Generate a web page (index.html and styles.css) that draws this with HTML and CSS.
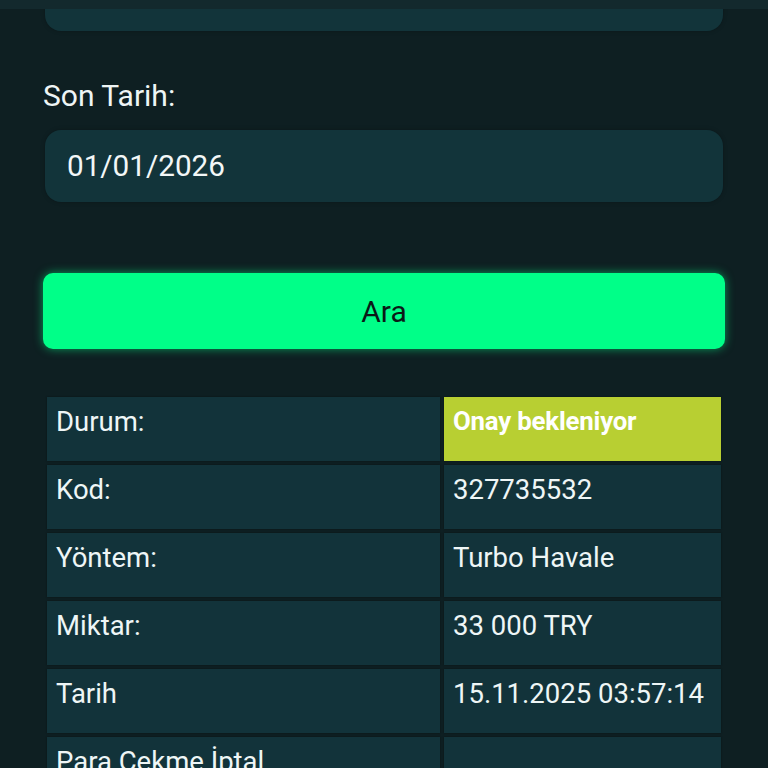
FILE: index.html
```html
<!DOCTYPE html>
<html lang="tr">
<head>
<meta charset="utf-8">
<title>Para Çekme</title>
<link rel="stylesheet" href="styles.css">
</head>
<body>
<div class="topbar"></div>
<main class="page">
  <div class="input prev"></div>
  <label class="label">Son Tarih:</label>
  <div class="input">01/01/2026</div>
  <button class="btn">Ara</button>
  <table class="info">
    <tr><td class="k">Durum:</td><td class="v status">Onay bekleniyor</td></tr>
    <tr><td class="k">Kod:</td><td class="v">327735532</td></tr>
    <tr><td class="k">Yöntem:</td><td class="v">Turbo Havale</td></tr>
    <tr><td class="k">Miktar:</td><td class="v">33 000 TRY</td></tr>
    <tr><td class="k">Tarih</td><td class="v">15.11.2025 03:57:14</td></tr>
    <tr><td class="k">Para Çekme İptal</td><td class="v"></td></tr>
  </table>
</main>
</body>
</html>
```

FILE: styles.css
```css
html, body {
  margin: 0;
  padding: 0;
  background: #0e1f22;
  font-family: Roboto, "Liberation Sans", sans-serif;
  color: #eef6f6;
  overflow: hidden;
  height: 768px;
}
.topbar {
  position: fixed;
  top: 0;
  left: 0;
  right: 0;
  height: 9px;
  background: #13292d;
  z-index: 2;
}
.page {
  padding: 0 43px;
  display: flex;
  flex-direction: column;
}
.input {
  margin: 0 2px;
  height: 72px;
  box-sizing: border-box;
  border-radius: 16px;
  background: #12343a;
  font-size: 29.7px;
  line-height: 72px;
  padding-left: 22px;
  color: #f2f7f7;
  box-shadow: 0 0 4px rgba(0, 0, 0, 0.25);
}
.prev {
  margin-top: -41px;
}
.label {
  font-size: 30px;
  line-height: 35px;
  margin-top: 47px;
  margin-bottom: 17px;
  color: #eef5f5;
}
.btn {
  margin-top: 71px;
  height: 76px;
  border: 0;
  border-radius: 10px;
  background: #00ff88;
  color: #0b1a17;
  font-family: Roboto, "Liberation Sans", sans-serif;
  font-size: 30px;
  padding: 0;
  box-shadow: 0 0 10px rgba(0, 255, 136, 0.55);
}
.info {
  margin-top: 44px;
  border-collapse: separate;
  border-spacing: 4px;
  width: 682px;
  table-layout: fixed;
}
.info td {
  background: #12333a;
  height: 64px;
  box-sizing: border-box;
  padding: 8px 9px 23px;
  vertical-align: top;
  font-size: 27.5px;
  line-height: 33px;
  color: #eef6f6;
  box-shadow: 0 0 2px rgba(0, 0, 0, 0.4);
}
.info td.k {
  width: 393px;
}
.info td.status {
  background: #b8cf32;
  color: #ffffff;
  font-weight: 700;
  font-size: 25.8px;
  letter-spacing: -0.2px;
}
```
